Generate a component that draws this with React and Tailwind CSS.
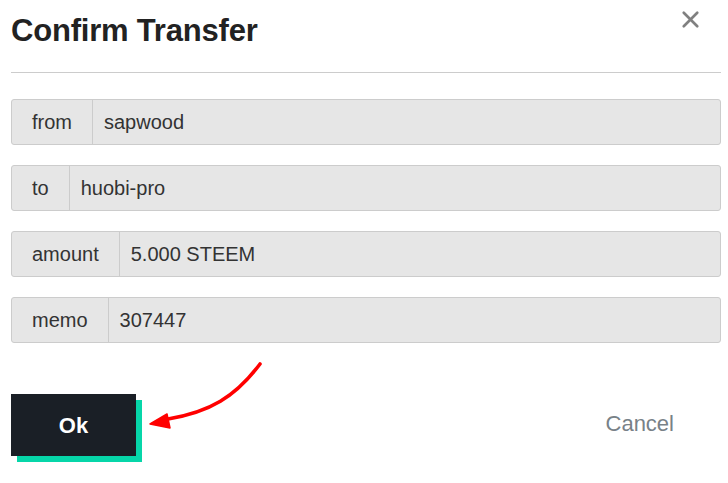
import { X } from 'lucide-react'

const rows = [
  { label: 'from', value: 'sapwood' },
  { label: 'to', value: 'huobi-pro' },
  { label: 'amount', value: '5.000 STEEM' },
  { label: 'memo', value: '307447' },
]

// Confirmation dialog body for a token transfer.
export default function App() {
  return (
    <div className="h-[483px] w-[728px] bg-white font-['Liberation_Sans',Arial,sans-serif] text-[#333]">
      <div className="px-[11px] pr-[7px]">
        <div className="flex h-[73px] items-start justify-between border-b border-[#cccccc]">
          <h1 className="mt-[11px] text-[31px] font-bold leading-[40px] tracking-[-0.2px] text-[#222]">Confirm Transfer</h1>
          <button aria-label="Close" className="mr-[17px] mt-[6px] text-[#808080]">
            <X className="h-[27px] w-[27px]" strokeWidth={2.4} />
          </button>
        </div>

        <div className="mt-[26px] flex flex-col gap-[20px]">
          {rows.map((r) => (
            <div
              key={r.label}
              className="flex h-[46px] items-stretch rounded-[3px] border border-[#cccccc] bg-[#e6e6e6] text-[20px]"
            >
              <span className="flex items-center border-r border-[#cccccc] px-[20px]">{r.label}</span>
              <span className="flex items-center px-[11px]">{r.value}</span>
            </div>
          ))}
        </div>
      </div>

      <div className="relative mt-[51px] flex items-center justify-between pl-[11px] pr-[54px]">
        <div className="relative h-[62px] w-[125px]">
          <div className="absolute left-[6px] top-[6px] h-[62px] w-[125px] bg-[#06d6a9]" />
          <button className="relative flex h-[62px] w-[125px] items-center justify-center bg-[#1a1f26] text-[22px] font-bold text-white">
            Ok
          </button>
        </div>
        <button className="mt-[-4px] text-[22px] text-[#788187]">Cancel</button>

        <svg className="absolute left-0 top-[-32px]" width="280" height="80" viewBox="0 0 280 80" fill="none">
          <path d="M260 2 C 235 35, 210 50, 168 57" stroke="#ff0000" strokeWidth="3.6" strokeLinecap="round" />
          <path d="M150 62 L167 52 L170 66 Z" fill="#ff0000" stroke="#ff0000" strokeWidth="1.5" strokeLinejoin="round" />
        </svg>
      </div>
    </div>
  )
}
